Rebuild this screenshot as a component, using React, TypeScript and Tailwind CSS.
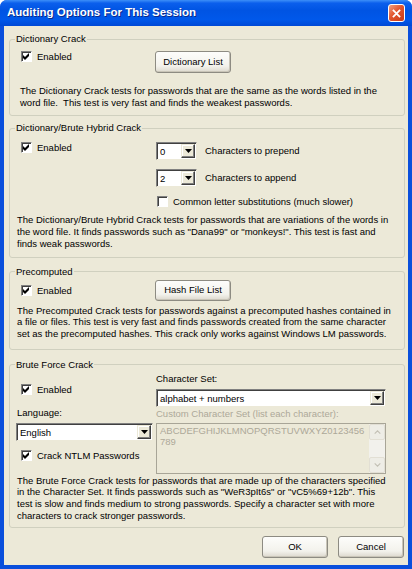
import React from 'react';

type CheckProps = { checked?: boolean; label: string; className?: string };

const Checkbox = ({ checked = false, label, className = '' }: CheckProps) => (
  <div className={`flex h-[13px] items-center ${className}`}>
    <span className="ml-[4px] flex h-[11px] w-[11px] shrink-0 items-center justify-center border border-b-white border-l-[#808080] border-r-white border-t-[#808080] bg-white shadow-[inset_1px_1px_0_#404040]">
      {checked && (
        <svg viewBox="0 0 7 7" className="h-[7px] w-[7px]">
          <path d="M0 2 L2 4 L6 0 L6 3 L2 7 L0 5 Z" fill="#000" />
        </svg>
      )}
    </span>
    <span className="ml-[5px] whitespace-nowrap leading-[13px]">{label}</span>
  </div>
);

const Arrow = () => (
  <svg viewBox="0 0 7 4" className="h-[4px] w-[7px]">
    <path d="M0 0 H7 L3.5 4 Z" fill="#000" />
  </svg>
);

const Combo = ({ value, className = '' }: { value: string; className?: string }) => (
  <div
    className={`flex h-[18px] items-stretch border border-b-[#ECE9D8] border-l-[#808080] border-r-[#ECE9D8] border-t-[#808080] bg-white shadow-[inset_1px_1px_0_#404040] ${className}`}
  >
    <span className="flex-1 overflow-hidden whitespace-nowrap pl-[3px] pt-[1px] leading-[15px]">{value}</span>
    <span className="mb-[1px] mr-[1px] mt-[1px] flex w-[14px] items-center justify-center border border-b-[#404040] border-l-[#ECE9D8] border-r-[#404040] border-t-[#ECE9D8] bg-[#ECE9D8] shadow-[inset_-1px_-1px_0_#808080,inset_1px_1px_0_#fff]">
      <Arrow />
    </span>
  </div>
);

const PushButton = ({ label, className = '' }: { label: string; className?: string }) => (
  <div
    className={`flex items-center justify-center rounded-[3px] border border-[#8d8b82] bg-[linear-gradient(to_bottom,#fdfdfb_0%,#f3f2ec_70%,#dcd8cd_100%)] shadow-[inset_-1px_-1px_0_#c9c5b8] ${className}`}
  >
    {label}
  </div>
);

const Group = ({ title, className = '', children }: { title: string; className?: string; children: React.ReactNode }) => (
  <fieldset className={`rounded-[3px] border border-[#D0D0BF] px-[7px] ${className}`}>
    <legend className="-ml-[2px] px-[1px] leading-[12px]">{title}</legend>
    {children}
  </fieldset>
);

const Lines = ({ lines, className = '' }: { lines: string[]; className?: string }) => (
  <div className={`leading-[11.7px] ${className}`}>
    {lines.map((line, i) => (
      <div key={i} className="whitespace-pre">
        {line}
      </div>
    ))}
  </div>
);

export default function App() {
  return (
    <div className="flex h-[569px] w-[412px] flex-col rounded-t-[7px] bg-[#0a4fdc] font-['Liberation_Sans',Arial,sans-serif] text-[9.5px] text-black">
      {/* title bar */}
      <div className="flex h-[26px] items-center justify-between rounded-t-[7px] bg-[linear-gradient(to_bottom,#3d8ff8_0%,#0b5fec_12%,#0054e3_40%,#0058ea_75%,#0049d6_100%)] pl-[7px] pr-[7px]">
        <span className="text-[11.5px] font-bold text-white [text-shadow:1px_1px_0_#0a2a8a]">
          Auditing Options For This Session
        </span>
        <div className="flex h-[18px] w-[17px] items-center justify-center rounded-[3px] border border-white bg-[linear-gradient(135deg,#f0a080_0%,#e2562f_45%,#c93a16_100%)]">
          <svg viewBox="0 0 10 10" className="h-[9px] w-[9px]">
            <path d="M1 1 L9 9 M9 1 L1 9" stroke="#fff" strokeWidth="2" />
          </svg>
        </div>
      </div>

      {/* client area */}
      <div className="mx-[4px] mb-[4px] flex flex-1 flex-col bg-[#ECE9D8] pl-[5px] pr-[3px] pt-[7px]">
        <Group title="Dictionary Crack" className="pb-[7px]">
          <div className="mt-[6px] flex">
            <div className="w-[138px]">
              <Checkbox checked label="Enabled" className="mt-[-1px]" />
            </div>
            <PushButton label="Dictionary List" className="h-[22px] w-[76px]" />
          </div>
          <Lines
            className="mt-[12px] pl-[3px]"
            lines={[
              'The Dictionary Crack tests for passwords that are the same as the words listed in the',
              'word file.  This test is very fast and finds the weakest passwords.',
            ]}
          />
        </Group>

        <Group title="Dictionary/Brute Hybrid Crack" className="mt-[6px] pb-[7px]">
          <div className="flex">
            <div className="w-[138px]">
              <Checkbox checked label="Enabled" className="mt-[7px]" />
            </div>
            <div className="flex flex-col">
              <div className="mt-[8px] flex items-center">
                <Combo value="0" className="ml-[1px] w-[41px]" />
                <span className="ml-[8px]">Characters to prepend</span>
              </div>
              <div className="mt-[9px] flex items-center">
                <Combo value="2" className="ml-[1px] w-[41px]" />
                <span className="ml-[8px]">Characters to append</span>
              </div>
              <Checkbox label="Common letter substitutions (much slower)" className="-ml-[2px] mt-[8px]" />
            </div>
          </div>
          <Lines
            className="mt-[6px]"
            lines={[
              'The Dictionary/Brute Hybrid Crack tests for passwords that are variations of the words in',
              'the word file. It finds passwords such as "Dana99" or "monkeys!". This test is fast and',
              'finds weak passwords.',
            ]}
          />
        </Group>

        <Group title="Precomputed" className="mt-[8px] pb-[9px]">
          <div className="mt-[2px] flex items-center">
            <div className="w-[138px]">
              <Checkbox checked label="Enabled" className="mt-[1px]" />
            </div>
            <PushButton label="Hash File List" className="h-[21px] w-[76px]" />
          </div>
          <Lines
            className="mt-[4px]"
            lines={[
              'The Precomputed Crack tests for passwords against a precomputed hashes contained in',
              'a file or files. This test is very fast and finds passwords created from the same character',
              'set as the precomputed hashes. This crack only works against Windows LM passwords.',
            ]}
          />
        </Group>

        <Group title="Brute Force Crack" className="mt-[9px] pb-[6px]">
          <div className="flex">
            <div className="flex w-[139px] flex-col">
              <Checkbox checked label="Enabled" className="mt-[12px]" />
              <span className="mt-[11px] leading-[12px]">Language:</span>
              <Combo value="English" className="-ml-[1px] mt-[4px] w-[137px]" />
              <Checkbox checked label="Crack NTLM Passwords" className="mt-[8px]" />
            </div>
            <div className="flex flex-col">
              <span className="mt-[2px] leading-[12px]">Character Set:</span>
              <Combo value="alphabet + numbers" className="mt-[4px] w-[230px]" />
              <span className="mt-[1px] leading-[12px] text-[#ACA899]">Custom Character Set (list each character):</span>
              <div className="mt-[3px] flex h-[51px] w-[230px] border border-[#a8a597] bg-[#ECE9D8]">
                <Lines
                  className="flex-1 pl-[3px] pt-[1px] text-[#ACA899]"
                  lines={['ABCDEFGHIJKLMNOPQRSTUVWXYZ0123456', '789']}
                />
                <div className="flex w-[16px] flex-col justify-between bg-[#f2f1ec]">
                  <div className="flex h-[16px] items-center justify-center rounded-[2px] border border-[#e2dfd4] bg-[#eeede6]">
                    <svg viewBox="0 0 8 5" className="h-[4px] w-[7px]">
                      <path d="M0.5 4.5 L4 1 L7.5 4.5" stroke="#c3c0b5" strokeWidth="1.4" fill="none" />
                    </svg>
                  </div>
                  <div className="flex h-[16px] items-center justify-center rounded-[2px] border border-[#e2dfd4] bg-[#eeede6]">
                    <svg viewBox="0 0 8 5" className="h-[4px] w-[7px]">
                      <path d="M0.5 0.5 L4 4 L7.5 0.5" stroke="#c3c0b5" strokeWidth="1.4" fill="none" />
                    </svg>
                  </div>
                </div>
              </div>
            </div>
          </div>
          <Lines
            className="mt-[1px]"
            lines={[
              'The Brute Force Crack tests for passwords that are made up of the characters specified',
              'in the Character Set. It finds passwords such as "WeR3pIt6s" or "vC5%69+12b". This',
              'test is slow and finds medium to strong passwords. Specify a character set with more',
              'characters to crack stronger passwords.',
            ]}
          />
        </Group>

        <div className="mt-[8px] flex justify-end gap-[10px] pr-[1px]">
          <PushButton label="OK" className="h-[22px] w-[66px] border-[#3c3c3c]" />
          <PushButton label="Cancel" className="h-[22px] w-[66px]" />
        </div>
      </div>
    </div>
  );
}
